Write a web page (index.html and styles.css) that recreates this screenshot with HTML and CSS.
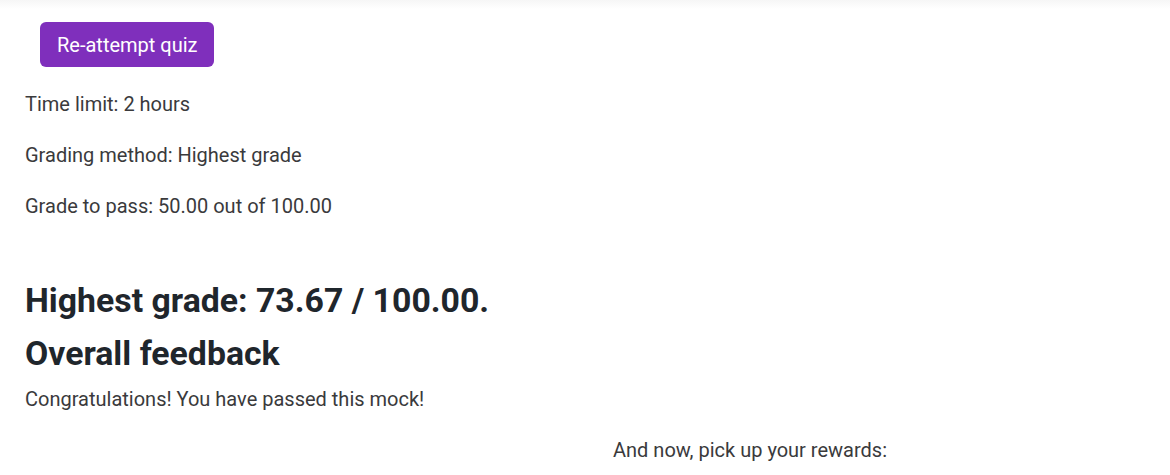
FILE: index.html
```html
<!DOCTYPE html>
<html lang="en">
<head>
<meta charset="utf-8">
<title>Quiz</title>
<link rel="stylesheet" href="styles.css">
</head>
<body>
<div class="topshade"></div>
<main class="content">
  <div class="actions">
    <button class="btn-primary" type="button">Re-attempt quiz</button>
  </div>
  <div class="info">
    <p>Time limit: 2 hours</p>
    <p>Grading method: Highest grade</p>
    <p>Grade to pass: 50.00 out of 100.00</p>
  </div>
  <h3 class="grade">Highest grade: 73.67 / 100.00.</h3>
  <h3 class="feedback-title">Overall feedback</h3>
  <p>Congratulations! You have passed this mock!</p>
  <p class="rewards">And now, pick up your rewards:</p>
</main>
</body>
</html>
```

FILE: styles.css
```css
html, body {
  margin: 0;
  padding: 0;
  background: #ffffff;
}
body {
  font-family: Roboto, "Liberation Sans", sans-serif;
  font-size: 20px;
  line-height: 30px;
  color: #3a3a3c;
  overflow: hidden;
}
.topshade {
  height: 9px;
  background: linear-gradient(#f6f6f6, #ffffff);
}
.content {
  padding: 0 25px;
}
.actions {
  padding: 13px 0 0 15px;
  margin-bottom: 22px;
}
.btn-primary {
  display: inline-block;
  font-family: Roboto, "Liberation Sans", sans-serif;
  font-size: 20px;
  line-height: 30px;
  color: #ffffff;
  background: #7f2fbc;
  border: none;
  border-radius: 6px;
  padding: 7.5px 17px;
  cursor: pointer;
}
p {
  margin: 0 0 21px;
}
.info p:last-child {
  margin-bottom: 0;
}
h3 {
  font-size: 33.8px;
  font-weight: 700;
  line-height: 40.8px;
  color: #1f262c;
  margin: 0;
}
.grade {
  margin-top: 59.5px;
  margin-bottom: 13px;
}
.feedback-title {
  margin-bottom: 8.5px;
}
.rewards {
  padding-left: 588px;
}
```
